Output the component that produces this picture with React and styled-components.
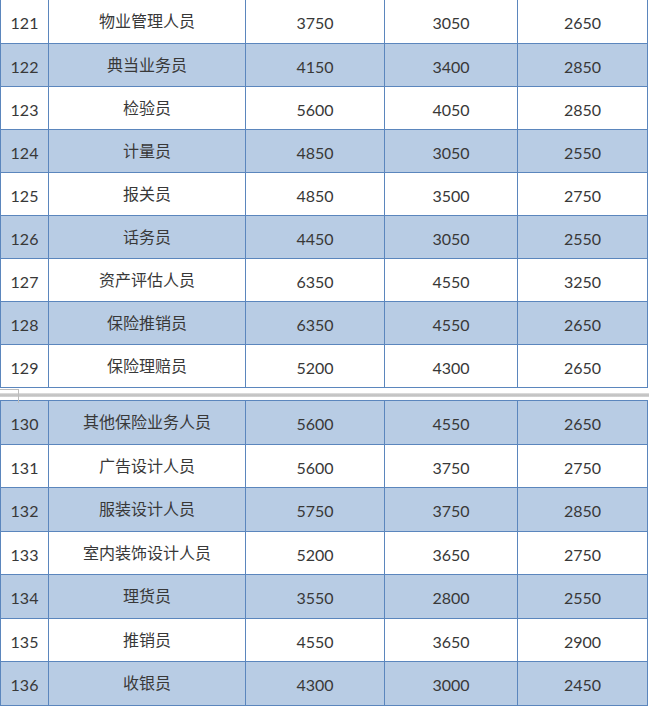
import React from "react";
import styled, { createGlobalStyle } from "styled-components";

const Global = createGlobalStyle`
  html, body { margin: 0; padding: 0; background: #ffffff; }
  body { width: 649px; height: 706px; overflow: hidden; }
`;

const Page = styled.div`
  position: relative;
  width: 649px;
  height: 706px;
  background: #fff;
  display: flex;
  flex-direction: column;
`;

const Table = styled.div`
  display: flex;
  flex-direction: column;
  width: 648px;
`;

const Row = styled.div`
  display: grid;
  grid-template-columns: 48px 197px 139px 133px 131px;
  height: ${(p) => p.$h}px;
  box-sizing: border-box;
  border-top: ${(p) => (p.$top ? "1px solid #5b86bd" : "none")};
  border-bottom: 1px solid #5b86bd;
  background: ${(p) => (p.$shaded ? "#b8cce4" : "#ffffff")};
`;

const Cell = styled.div`
  display: flex;
  align-items: center;
  justify-content: center;
  box-sizing: border-box;
  border-left: 1px solid #5b86bd;
  border-right: ${(p) => (p.$last ? "1px solid #5b86bd" : "none")};
  padding-top: ${(p) => (p.$cjk ? "0" : "2px")};
  padding-bottom: ${(p) => (p.$cjk ? "3px" : "0")};
  font-family: ${(p) =>
    p.$cjk
      ? '"Noto Sans CJK SC", "Noto Sans", sans-serif'
      : 'Lato, "Noto Sans CJK SC", sans-serif'};
  font-size: 16px;
  color: #383838;
  white-space: nowrap;
`;

const Break = styled.div`
  height: 12px;
  display: flex;
  flex-direction: column;
  justify-content: center;
`;

const Band = styled.div`
  height: 4px;
  width: 649px;
  margin-top: 1px;
  background: linear-gradient(#e4e4e4, #bdbdbd 50%, #d8d8d8);
`;

const Marker = styled.div`
  position: absolute;
  left: 0;
  top: 389px;
  width: 18px;
  height: 13px;
  border-top: 1px solid #bcbcbc;
  border-right: 1px solid #bcbcbc;
`;

const top = [
  ["121", "物业管理人员", "3750", "3050", "2650"],
  ["122", "典当业务员", "4150", "3400", "2850"],
  ["123", "检验员", "5600", "4050", "2850"],
  ["124", "计量员", "4850", "3050", "2550"],
  ["125", "报关员", "4850", "3500", "2750"],
  ["126", "话务员", "4450", "3050", "2550"],
  ["127", "资产评估人员", "6350", "4550", "3250"],
  ["128", "保险推销员", "6350", "4550", "2650"],
  ["129", "保险理赔员", "5200", "4300", "2650"],
];

const bottom = [
  ["130", "其他保险业务人员", "5600", "4550", "2650"],
  ["131", "广告设计人员", "5600", "3750", "2750"],
  ["132", "服装设计人员", "5750", "3750", "2850"],
  ["133", "室内装饰设计人员", "5200", "3650", "2750"],
  ["134", "理货员", "3550", "2800", "2550"],
  ["135", "推销员", "4550", "3650", "2900"],
  ["136", "收银员", "4300", "3000", "2450"],
];

const renderRow = (r, h, shaded, isTop) => (
  <Row key={r[0]} $h={h} $shaded={shaded} $top={isTop}>
    <Cell>{r[0]}</Cell>
    <Cell $cjk>{r[1]}</Cell>
    <Cell>{r[2]}</Cell>
    <Cell>{r[3]}</Cell>
    <Cell $last>{r[4]}</Cell>
  </Row>
);

export default function App() {
  return (
    <>
      <Global />
      <Page>
        <Table>
          {top.map((r, i) => renderRow(r, i === 0 ? 44 : 43, i % 2 === 1, false))}
        </Table>
        <Break>
          <Band />
        </Break>
        <Table>
          {bottom.map((r, i) =>
            renderRow(r, i === 0 ? 45 : i % 2 === 0 ? 44 : 43, i % 2 === 0, i === 0)
          )}
        </Table>
        <Marker />
      </Page>
    </>
  );
}
